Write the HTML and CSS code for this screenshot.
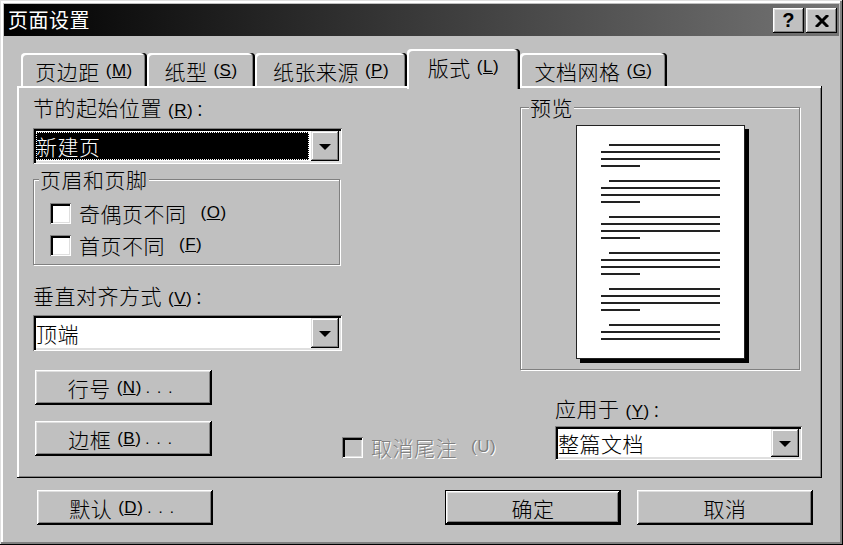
FILE: index.html
```html
<!DOCTYPE html>
<html lang="zh-CN">
<head>
    <meta charset="UTF-8">
    <title>页面设置</title>
    <link rel="stylesheet" href="styles.css">
</head>
<body>
    <div class="window">
        <div class="titlebar">
            <span class="title">页面设置</span>
            <div class="title-btns">
                <div class="tbtn">?</div>
                <div class="tbtn">
                    <svg width="14" height="12" viewBox="0 0 14 12">
                        <path d="M1 0 L13 12 M13 0 L1 12" stroke="#000" stroke-width="3" fill="none"/>
                    </svg>
                </div>
            </div>
        </div>

        <div class="content">
            <div class="tabs">
                <div class="tab t1">页边距<span class="mn">(<u>M</u>)</span></div>
                <div class="tab t2">纸型<span class="mn">(<u>S</u>)</span></div>
                <div class="tab t3">纸张来源<span class="mn">(<u>P</u>)</span></div>
                <div class="tab t4 active">版式<span class="mn">(<u>L</u>)</span></div>
                <div class="tab t5">文档网格<span class="mn">(<u>G</u>)</span></div>
            </div>

            <div class="panel">
                <div class="col-left">
                    <div class="label">节的起始位置<span class="mn">(<u>R</u>)</span><span class="colon">:</span></div>
                    <div class="combo combo-1">
                        <div class="combo-text selected">新建页</div>
                        <div class="drop"><i></i></div>
                    </div>

                    <fieldset class="group group-hf">
                        <legend>页眉和页脚</legend>
                        <div class="check"><span class="box"></span>奇偶页不同<span class="mn">(<u>O</u>)</span></div>
                        <div class="check"><span class="box"></span>首页不同<span class="mn">(<u>F</u>)</span></div>
                    </fieldset>

                    <div class="label label-2">垂直对齐方式<span class="mn">(<u>V</u>)</span><span class="colon">:</span></div>
                    <div class="combo combo-2">
                        <div class="combo-text">顶端</div>
                        <div class="drop"><i></i></div>
                    </div>

                    <div class="btn btn-side btn-lines">行号<span class="mn">(<u>N</u>)</span><span class="dots">...</span></div>
                    <div class="btn btn-side btn-borders">边框<span class="mn">(<u>B</u>)</span><span class="dots">...</span></div>
                </div>

                <div class="col-mid">
                    <div class="check disabled"><span class="box"></span>取消尾注<span class="mn">(U)</span></div>
                </div>

                <div class="col-right">
                    <fieldset class="group group-preview">
                        <legend>预览</legend>
                        <div class="page">
                            <div class="para"><i class="ln indent"></i><i class="ln"></i><i class="ln"></i><i class="ln short"></i></div>
                            <div class="para"><i class="ln indent"></i><i class="ln"></i><i class="ln"></i><i class="ln short"></i></div>
                            <div class="para"><i class="ln indent"></i><i class="ln"></i><i class="ln"></i><i class="ln short"></i></div>
                            <div class="para"><i class="ln indent"></i><i class="ln"></i><i class="ln"></i><i class="ln short"></i></div>
                            <div class="para"><i class="ln indent"></i><i class="ln"></i><i class="ln"></i><i class="ln short"></i></div>
                            <div class="para"><i class="ln indent"></i><i class="ln"></i><i class="ln"></i></div>
                        </div>
                    </fieldset>

                    <div class="label label-apply">应用于<span class="mn">(<u>Y</u>)</span><span class="colon">:</span></div>
                    <div class="combo combo-3">
                        <div class="combo-text">整篇文档</div>
                        <div class="drop"><i></i></div>
                    </div>
                </div>
            </div>

            <div class="footer">
                <div class="btn btn-foot">默认<span class="mn">(<u>D</u>)</span><span class="dots">...</span></div>
                <div class="btn btn-foot btn-default btn-ok">确定</div>
                <div class="btn btn-foot">取消</div>
            </div>
        </div>
    </div>
</body>
</html>
```

FILE: styles.css
```css
body {
    margin: 0;
    padding: 0;
    background-color: #c0c0c0;
    font-family: "Noto Sans CJK SC", "Liberation Sans", sans-serif;
    font-size: 21px;
    font-weight: 300;
    letter-spacing: 0.5px;
    color: #000;
}

.window {
    width: 843px;
    height: 545px;
    box-sizing: border-box;
    padding: 4px;
    background-color: #c0c0c0;
    box-shadow: inset -1px -1px #000, inset 1px 1px #dfdfdf, inset -3px -3px #808080, inset 3px 3px #fff;
}

/* title bar */
.titlebar {
    height: 32px;
    display: flex;
    align-items: center;
    justify-content: space-between;
    padding: 0 2px 0 4px;
    background: linear-gradient(to right, #000 0%, #3a3a3a 50%, #747474 100%);
}

.title {
    color: #fff;
    font-size: 20px;
    font-weight: 400;
    line-height: 24px;
}

.title-btns {
    display: flex;
    gap: 2px;
    padding-top: 1px;
}

.tbtn {
    width: 31px;
    height: 25px;
    box-sizing: border-box;
    display: flex;
    align-items: center;
    justify-content: center;
    background-color: #c0c0c0;
    font-family: "Liberation Sans", sans-serif;
    font-weight: bold;
    font-size: 20px;
    box-shadow: inset -1px -1px #000, inset 1px 1px #fff, inset -2px -2px #808080, inset 2px 2px #dfdfdf;
}

/* tabs */
.content {
    padding: 13px 17px 0 13px;
}

.tabs {
    display: flex;
    align-items: flex-end;
    height: 37px;
    padding-left: 4px;
}

.tab {
    height: 33px;
    box-sizing: border-box;
    display: flex;
    align-items: center;
    justify-content: center;
    padding-top: 2px;
    border-radius: 4px 4px 0 0;
    background-color: #c0c0c0;
    box-shadow: inset -2px 0 #000, inset -3px 0 #808080, inset 2px 2px #fff;
    white-space: nowrap;
}

.t1 { width: 126px; }
.t2 { width: 108px; }
.t3 { width: 152px; }
.t4 { width: 113px; }
.t5 { width: 147px; }

.tab.active {
    position: relative;
    z-index: 1;
    height: 40px;
    margin-bottom: -3px;
    padding-top: 0;
    padding-bottom: 5px;
}

.mn {
    font-family: "Liberation Sans", sans-serif;
    font-weight: 400;
    font-size: 17px;
    letter-spacing: 0.5px;
    margin-left: 6px;
}

.colon {
    margin-left: 4px;
}

.dots {
    font-family: "Liberation Sans", sans-serif;
    font-size: 15px;
    letter-spacing: 7px;
    margin-left: 4px;
}

/* panel */
.panel {
    height: 392px;
    box-sizing: border-box;
    display: flex;
    padding: 9px 20px 0 16px;
    box-shadow: inset -1px -1px #000, inset 2px 2px #fff, inset -2px -2px #808080;
}

.col-left {
    width: 309px;
    display: flex;
    flex-direction: column;
    align-items: flex-start;
}

.col-mid {
    flex: 1;
    display: flex;
    align-items: flex-end;
    padding-bottom: 20px;
}

.col-right {
    width: 282px;
    display: flex;
    flex-direction: column;
}

.label {
    line-height: 24px;
    height: 24px;
}

.label-2 {
    margin-top: 18px;
}

.label-apply {
    margin-top: 26px;
    margin-left: 35px;
}

/* combo boxes */
.combo {
    box-sizing: border-box;
    display: flex;
    align-items: stretch;
    padding: 3px;
    background-color: #fff;
    box-shadow: inset 1px 1px #808080, inset -1px -1px #fff, inset 3px 3px #000, inset -3px -3px #dfdfdf;
}

.combo-1 {
    width: 309px;
    height: 36px;
    margin-top: 9px;
}

.combo-2 {
    width: 309px;
    height: 36px;
    margin-top: 8px;
}

.combo-3 {
    width: 247px;
    height: 34px;
    margin-top: 6px;
    margin-left: 35px;
}

.combo-text {
    flex: 1;
    display: flex;
    align-items: center;
    line-height: 24px;
}

.combo-text.selected {
    background-color: #000;
    color: #fff;
    outline: 1px dotted #fff;
    outline-offset: -1px;
    margin: 1px 2px 1px 0;
}

.drop {
    width: 28px;
    display: flex;
    align-items: center;
    justify-content: center;
    background-color: #c0c0c0;
    box-shadow: inset -1px -1px #000, inset 1px 1px #dfdfdf, inset -2px -2px #808080, inset 2px 2px #fff;
}

.drop i {
    width: 0;
    height: 0;
    border-left: 6px solid transparent;
    border-right: 6px solid transparent;
    border-top: 6px solid #000;
    margin-top: 2px;
}

/* group boxes */
.group {
    margin: 0;
    border: 1px solid #808080;
    box-shadow: inset 1px 1px #fff, 1px 1px #fff;
}

.group legend {
    padding: 0 1px;
    line-height: 22px;
    background-color: #c0c0c0;
}

.group-hf {
    width: 307px;
    box-sizing: border-box;
    margin-top: 4px;
    padding: 12px 0 8px 16px;
    display: flex;
    flex-direction: column;
    gap: 10px;
}

.group-hf legend {
    margin-left: -11px;
}

.group-preview {
    width: 280px;
    box-sizing: border-box;
    margin-top: 1px;
    padding: 7px 0 10px 0;
    display: flex;
    justify-content: center;
}

.group-preview legend {
    margin-left: 8px;
}

/* checkboxes */
.check {
    display: flex;
    align-items: center;
    gap: 8px;
    line-height: 22px;
}

.box {
    width: 21px;
    height: 21px;
    box-sizing: border-box;
    background-color: #fff;
    box-shadow: inset 1px 1px #808080, inset -1px -1px #fff, inset 3px 3px #000, inset -2px -2px #dfdfdf;
}

.check.disabled {
    color: #808080;
    text-shadow: 1px 1px #fff;
}

.check.disabled .box {
    background-color: #c0c0c0;
}

/* preview page */
.page {
    width: 169px;
    height: 234px;
    box-sizing: border-box;
    border: 1px solid #222;
    background-color: #fff;
    box-shadow: 4px 4px 0 #000;
    padding: 18px 24px 0 24px;
    display: flex;
    flex-direction: column;
    gap: 13px;
}

.para {
    display: flex;
    flex-direction: column;
    gap: 5px;
}

.ln {
    display: block;
    height: 2px;
    background-color: #222;
}

.ln.indent {
    margin-left: 8px;
}

.ln.short {
    width: 39px;
}

/* buttons */
.btn {
    box-sizing: border-box;
    display: flex;
    align-items: center;
    justify-content: center;
    height: 35px;
    background-color: #c0c0c0;
    box-shadow: inset -1px -1px #000, inset 1px 1px #fff, inset -2px -2px #000, inset 2px 2px #dfdfdf, inset -3px -3px #808080;
    white-space: nowrap;
}

.btn-side {
    width: 177px;
    margin-left: 2px;
}

.btn-lines {
    margin-top: 19px;
}

.btn-borders {
    margin-top: 16px;
}

.footer {
    display: flex;
    align-items: center;
    padding: 12px 9px 0 20px;
}

.btn-foot {
    width: 176px;
}

.btn-ok {
    margin-left: auto;
    margin-right: 16px;
}

.btn-default {
    border: 1px solid #000;
}
```
